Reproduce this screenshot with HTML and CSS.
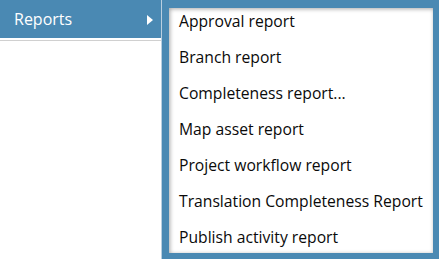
FILE: index.html
```html
<!DOCTYPE html>
<html>
<head>
<meta charset="utf-8">
<link rel="stylesheet" href="styles.css">
</head>
<body>
<div class="menu">
  <div class="main">
    <div class="item active">
      <span class="label">Reports</span>
      <span class="arrow"></span>
    </div>
    <div class="sep"></div>
  </div>
  <div class="submenu">
    <ul class="list">
      <li>Approval report</li>
      <li>Branch report</li>
      <li>Completeness report...</li>
      <li>Map asset report</li>
      <li>Project workflow report</li>
      <li>Translation Completeness Report</li>
      <li>Publish activity report</li>
    </ul>
  </div>
</div>
</body>
</html>
```
FILE: styles.css
```css
html, body {
  margin: 0;
  padding: 0;
  background: #fff;
  font-family: "Open Sans", "Noto Sans", sans-serif;
}
.menu {
  display: flex;
  align-items: flex-start;
  width: 439px;
  height: 259px;
  overflow: hidden;
}
.main {
  width: 161px;
  flex: none;
}
.item {
  height: 38px;
  background: #4a89b3;
  color: #fff;
  display: flex;
  align-items: center;
  padding-left: 14px;
  padding-right: 8px;
  font-size: 16px;
}
.label {
  flex: 1;
}
.arrow {
  width: 0;
  height: 0;
  border-top: 5px solid transparent;
  border-bottom: 5px solid transparent;
  border-left: 6px solid #fff;
  margin-top: 2px;
}
.sep {
  margin-top: 2px;
  height: 1px;
  background: #d0d0d0;
}
.submenu {
  flex: 1;
  height: 259px;
  box-sizing: border-box;
  background: #4a89b3;
  border-left: 1px solid #b9cfe0;
  padding: 8px 6px 6px 7px;
}
.list {
  margin: 0;
  list-style: none;
  background: #fff;
  height: 245px;
  box-sizing: border-box;
  padding: 3px 0 0 10px;
  box-shadow: inset 1px 1px 4px rgba(0,0,0,0.35);
  display: flex;
  flex-direction: column;
  gap: 16px;
}
.list li {
  line-height: 20px;
  font-size: 15.7px;
  color: #0a0a0a;
  white-space: nowrap;
}
```
